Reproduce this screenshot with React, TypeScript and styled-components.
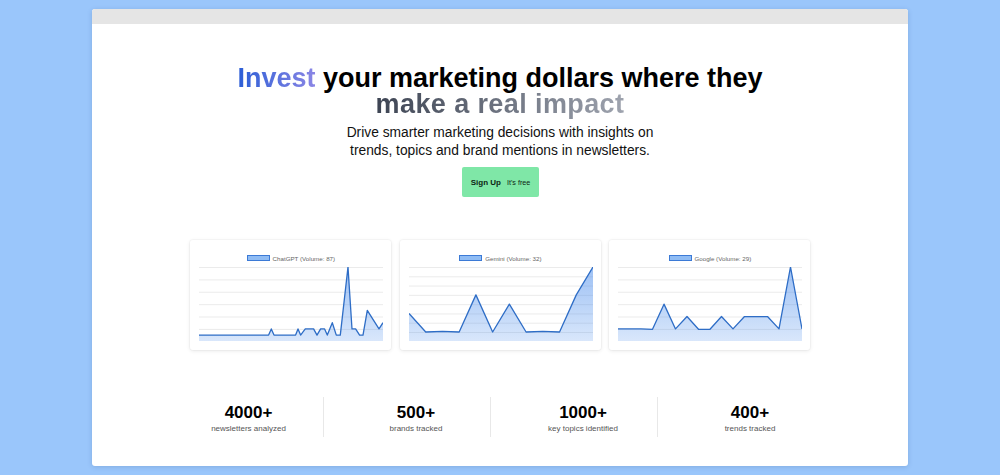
import React from "react";
import styled, { createGlobalStyle } from "styled-components";

const GlobalStyle = createGlobalStyle`
  html, body { margin: 0; padding: 0; }
  body {
    background: #9ac6fb;
    font-family: "Liberation Sans", Arial, Helvetica, sans-serif;
  }
  * { box-sizing: border-box; }
`;

const Page = styled.div`
  height: 475px;
  padding: 9px 92px;
`;

const Window = styled.div`
  height: 457px;
  background: #ffffff;
  border-radius: 3px;
  box-shadow: 0 1px 5px rgba(30, 60, 110, 0.18);
  display: flex;
  flex-direction: column;
  overflow: hidden;
`;

const TitleBar = styled.div`
  flex: none;
  height: 15px;
  background: #e5e5e5;
`;

const Content = styled.main`
  display: flex;
  flex-direction: column;
  align-items: center;
  padding-top: 41px;
`;

const Headline = styled.h1`
  margin: 0;
  font-size: 27px;
  line-height: 26.4px;
  font-weight: 700;
  color: #000;
  text-align: center;
`;

const GradientText = styled.span<{ $from: string; $to: string; $spacing?: string }>`
  background: linear-gradient(90deg, ${(p) => p.$from}, ${(p) => p.$to});
  -webkit-background-clip: text;
  background-clip: text;
  -webkit-text-fill-color: transparent;
  color: transparent;
  letter-spacing: ${(p) => p.$spacing ?? "0"};
`;

const Subtitle = styled.p`
  margin: 6px 0 0;
  font-size: 13.8px;
  line-height: 18px;
  color: #111;
  text-align: center;
`;

const SignUpButton = styled.button`
  margin-top: 7.6px;
  width: 77px;
  height: 29.4px;
  padding: 0 8px 0 9px;
  border: none;
  border-radius: 2px;
  background: #7fe7a7;
  color: #0d1f14;
  font-family: inherit;
  display: flex;
  align-items: center;
  justify-content: center;
  gap: 6px;
  cursor: pointer;
`;

const ButtonLabel = styled.span`
  font-size: 8px;
  font-weight: 700;
`;

const ButtonNote = styled.span`
  font-size: 7.2px;
  font-weight: 400;
`;

const CardRow = styled.section`
  margin-top: 43.3px;
  display: flex;
  gap: 8.5px;
`;

const Card = styled.div`
  width: 201px;
  height: 110px;
  padding: 14px 8px 9px 9px;
  background: #fff;
  border-radius: 3px;
  box-shadow: 0 0 0 1px rgba(0, 0, 0, 0.025), 0 1px 4px rgba(0, 0, 0, 0.09);
  display: flex;
  flex-direction: column;
`;

const Legend = styled.div`
  height: 8px;
  margin-bottom: 4.7px;
  display: flex;
  align-items: center;
  justify-content: center;
  gap: 2.7px;
  font-size: 6.2px;
  color: #666;
  white-space: nowrap;
`;

const Swatch = styled.span`
  width: 23px;
  height: 6px;
  background: #8fbcf4;
  border: 1px solid #3c7ad6;
`;

const ChartSvg = styled.svg`
  display: block;
`;

const Stats = styled.section`
  margin-top: 47px;
  margin-right: 20px;
  display: grid;
  grid-template-columns: repeat(4, 167px);
`;

const Stat = styled.div`
  height: 40px;
  padding: 6.4px 0 0 18px;
  text-align: center;
  & + & {
    border-left: 1px solid #e8e8e8;
  }
`;

const StatNumber = styled.div`
  font-size: 17px;
  line-height: 20px;
  font-weight: 700;
  color: #000;
`;

const StatLabel = styled.div`
  margin-top: 1px;
  font-size: 8px;
  line-height: 10px;
  color: #555;
`;

type Pt = [number, number];

const W = 184;
const H = 74.3;

function TrendChart({ id, points, steps }: { id: string; points: Pt[]; steps: number }) {
  const sy = (v: number) => H - (v / steps) * H;
  const line = points
    .map(([x, v], i) => `${i ? "L" : "M"}${x.toFixed(2)} ${sy(v).toFixed(2)}`)
    .join(" ");
  const area = `${line} L${W} ${H} L0 ${H} Z`;
  const grid = Array.from({ length: steps + 1 }, (_, i) => (i * H) / steps);
  return (
    <ChartSvg width={W} height={H} viewBox={`0 0 ${W} ${H}`}>
      <defs>
        <linearGradient id={id} x1="0" y1="0" x2="0" y2={H} gradientUnits="userSpaceOnUse">
          <stop offset="0" stopColor="rgb(66,135,235)" stopOpacity="0.52" />
          <stop offset="1" stopColor="rgb(66,135,235)" stopOpacity="0.2" />
        </linearGradient>
      </defs>
      {grid.map((y, i) => (
        <line key={i} x1="0" x2={W} y1={y + 0.5} y2={y + 0.5} stroke="#ebebeb" strokeWidth="1" />
      ))}
      <path d={area} fill={`url(#${id})`} />
      <path d={line} fill="none" stroke="#2e6dc6" strokeWidth="1.3" strokeLinejoin="round" />
    </ChartSvg>
  );
}

const chatgpt: Pt[] = [
  [0, 0.5], [69.6, 0.5], [72.3, 1], [75, 0.5], [96.6, 0.5], [99, 1], [101.6, 0.5],
  [106.3, 1], [114.6, 1], [118, 0.5], [121.6, 1], [125.6, 1], [128.3, 0.5], [133.3, 1.5],
  [137.3, 0.5], [141.3, 0.5], [149, 6], [153, 1], [156.6, 1], [160.6, 0.5], [164, 0.5],
  [168.3, 2.5], [180, 1], [184, 1.5],
];

const uniform = (vals: number[]): Pt[] =>
  vals.map((v, i) => [(i * W) / (vals.length - 1), v]);

const gemini = uniform([3, 1, 1.07, 1, 5, 1, 4, 1, 1.07, 1, 5, 8]);
const google = uniform([1, 1, 1, 0.97, 3, 1, 2, 0.97, 0.97, 2, 1, 2, 2, 2, 1, 6, 1]);

const charts = [
  { id: "g1", label: "ChatGPT (Volume: 87)", points: chatgpt, steps: 6 },
  { id: "g2", label: "Gemini (Volume: 32)", points: gemini, steps: 8 },
  { id: "g3", label: "Google (Volume: 29)", points: google, steps: 6 },
];

const stats = [
  { n: "4000+", l: "newsletters analyzed" },
  { n: "500+", l: "brands tracked" },
  { n: "1000+", l: "key topics identified" },
  { n: "400+", l: "trends tracked" },
];

export default function App() {
  return (
    <>
      <GlobalStyle />
      <Page>
        <Window>
          <TitleBar />
          <Content>
            <Headline>
              <GradientText $from="#2b5ed6" $to="#8a86e5">Invest</GradientText> your marketing dollars where they
              <br />
              <GradientText $from="#3d4453" $to="#9ea3ae" $spacing="0.4px">
                make a real impact
              </GradientText>
            </Headline>
            <Subtitle>
              Drive smarter marketing decisions with insights on
              <br />
              trends, topics and brand mentions in newsletters.
            </Subtitle>
            <SignUpButton>
              <ButtonLabel>Sign Up</ButtonLabel>
              <ButtonNote>It's free</ButtonNote>
            </SignUpButton>
            <CardRow>
              {charts.map((c) => (
                <Card key={c.id}>
                  <Legend>
                    <Swatch />
                    <span>{c.label}</span>
                  </Legend>
                  <TrendChart id={c.id} points={c.points} steps={c.steps} />
                </Card>
              ))}
            </CardRow>
            <Stats>
              {stats.map((s) => (
                <Stat key={s.l}>
                  <StatNumber>{s.n}</StatNumber>
                  <StatLabel>{s.l}</StatLabel>
                </Stat>
              ))}
            </Stats>
          </Content>
        </Window>
      </Page>
    </>
  );
}
